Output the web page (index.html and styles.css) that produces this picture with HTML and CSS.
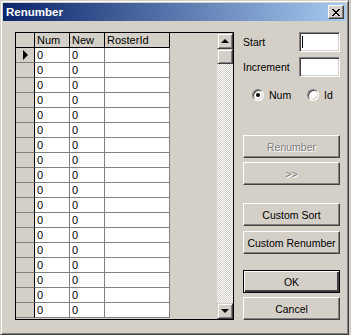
FILE: index.html
```html
<!DOCTYPE html>
<html lang="en">
<head>
    <meta charset="UTF-8">
    <meta name="viewport" content="width=device-width, initial-scale=1">
    <title>Renumber</title>
    <link rel="stylesheet" href="styles.css">
</head>
<body>
    <div class="window">
        <div class="titlebar">
            <span class="title">Renumber</span>
            <button type="button" class="close-btn" aria-label="Close">
                <svg width="8" height="7" viewBox="0 0 8 7" shape-rendering="crispEdges">
                    <path d="M0 0h2v1H0zM6 0h2v1H6zM1 1h2v1H1zM5 1h2v1H5zM2 2h4v1H2zM3 3h2v1H3zM2 4h4v1H2zM1 5h2v1H1zM5 5h2v1H5zM0 6h2v1H0zM6 6h2v1H6z" fill="#000"/>
                </svg>
            </button>
        </div>
        <div class="client">
            <div class="grid">
                <div class="grid-body">
                    <div class="grid-row header">
                        <div class="cell ind"></div>
                        <div class="cell">Num</div>
                        <div class="cell">New</div>
                        <div class="cell">RosterId</div>
                    </div>
                    <div class="grid-row current">
                        <div class="cell ind"><span class="pointer"></span></div>
                        <div class="cell">0</div>
                        <div class="cell">0</div>
                        <div class="cell"></div>
                    </div>
                    <div class="grid-row"><div class="cell ind"></div><div class="cell">0</div><div class="cell">0</div><div class="cell"></div></div>
                    <div class="grid-row"><div class="cell ind"></div><div class="cell">0</div><div class="cell">0</div><div class="cell"></div></div>
                    <div class="grid-row"><div class="cell ind"></div><div class="cell">0</div><div class="cell">0</div><div class="cell"></div></div>
                    <div class="grid-row"><div class="cell ind"></div><div class="cell">0</div><div class="cell">0</div><div class="cell"></div></div>
                    <div class="grid-row"><div class="cell ind"></div><div class="cell">0</div><div class="cell">0</div><div class="cell"></div></div>
                    <div class="grid-row"><div class="cell ind"></div><div class="cell">0</div><div class="cell">0</div><div class="cell"></div></div>
                    <div class="grid-row"><div class="cell ind"></div><div class="cell">0</div><div class="cell">0</div><div class="cell"></div></div>
                    <div class="grid-row"><div class="cell ind"></div><div class="cell">0</div><div class="cell">0</div><div class="cell"></div></div>
                    <div class="grid-row"><div class="cell ind"></div><div class="cell">0</div><div class="cell">0</div><div class="cell"></div></div>
                    <div class="grid-row"><div class="cell ind"></div><div class="cell">0</div><div class="cell">0</div><div class="cell"></div></div>
                    <div class="grid-row"><div class="cell ind"></div><div class="cell">0</div><div class="cell">0</div><div class="cell"></div></div>
                    <div class="grid-row"><div class="cell ind"></div><div class="cell">0</div><div class="cell">0</div><div class="cell"></div></div>
                    <div class="grid-row"><div class="cell ind"></div><div class="cell">0</div><div class="cell">0</div><div class="cell"></div></div>
                    <div class="grid-row"><div class="cell ind"></div><div class="cell">0</div><div class="cell">0</div><div class="cell"></div></div>
                    <div class="grid-row"><div class="cell ind"></div><div class="cell">0</div><div class="cell">0</div><div class="cell"></div></div>
                    <div class="grid-row"><div class="cell ind"></div><div class="cell">0</div><div class="cell">0</div><div class="cell"></div></div>
                    <div class="grid-row"><div class="cell ind"></div><div class="cell">0</div><div class="cell">0</div><div class="cell"></div></div>
                </div>
                <div class="vscroll">
                    <div class="scroll-btn"><span class="arrow up"></span></div>
                    <div class="scroll-thumb"></div>
                    <div class="scroll-track"></div>
                    <div class="scroll-btn"><span class="arrow down"></span></div>
                </div>
            </div>

            <div class="side">
                <div class="field-row">
                    <label>Start</label>
                    <div class="textbox focused"></div>
                </div>
                <div class="field-row increment">
                    <label>Increment</label>
                    <div class="textbox"></div>
                </div>
                <div class="radio-row">
                    <label class="radio"><span class="radio-dot checked"></span>Num</label>
                    <label class="radio"><span class="radio-dot"></span>Id</label>
                </div>

                <button type="button" class="btn renumber-btn" disabled>Renumber</button>
                <button type="button" class="btn next-btn" disabled>&gt;&gt;</button>

                <button type="button" class="btn sort-btn">Custom Sort</button>
                <button type="button" class="btn custom-btn">Custom Renumber</button>

                <button type="button" class="btn ok-btn">OK</button>
                <button type="button" class="btn cancel-btn">Cancel</button>
            </div>
        </div>
    </div>
</body>
</html>
```

FILE: styles.css
```css
* {
    box-sizing: border-box;
}

body {
    margin: 0;
    background-color: #d4d0c8;
    font-family: 'Liberation Sans', Arial, sans-serif;
    font-size: 11px;
    color: #000;
}

.window {
    width: 349px;
    height: 335px;
    padding: 2px;
    background-color: #d4d0c8;
    border: 1px solid;
    border-color: #d4d0c8 #404040 #404040 #d4d0c8;
    box-shadow: inset 1px 1px #fff, inset -1px -1px #808080;
}

.titlebar {
    display: flex;
    align-items: center;
    justify-content: space-between;
    height: 18px;
    padding: 0 2px 0 3px;
    background: linear-gradient(to right, #0a246a, #a6caf0);
}

.title {
    color: #fff;
    font-weight: bold;
    font-size: 11.5px;
}

.close-btn {
    display: flex;
    align-items: center;
    justify-content: center;
    width: 16px;
    height: 14px;
    padding: 0;
    background-color: #d4d0c8;
    border: 1px solid;
    border-color: #fff #404040 #404040 #fff;
    box-shadow: inset -1px -1px #808080;
}

.client {
    display: flex;
    padding: 11px 0 0 12px;
}

/* data grid */
.grid {
    display: flex;
    width: 219px;
    height: 288px;
    border: 1px solid #000;
}

.grid-body {
    flex: 1;
    overflow: hidden;
}

.grid-row {
    display: grid;
    grid-template-columns: 19px 35px 35px 65px;
    height: 15px;
}

.cell {
    padding-left: 2px;
    line-height: 14px;
    background-color: #fff;
    border-right: 1px solid #808080;
    border-bottom: 1px solid #808080;
    white-space: nowrap;
    overflow: hidden;
}

.cell.ind {
    background-color: #d4d0c8;
    border-right-color: #000;
}

.header .cell {
    background-color: #d4d0c8;
    border-color: #000;
}

.pointer {
    display: block;
    width: 0;
    height: 0;
    margin: 2px 0 0 5px;
    border-left: 5px solid #000;
    border-top: 5px solid transparent;
    border-bottom: 5px solid transparent;
}

.vscroll {
    display: flex;
    flex-direction: column;
    width: 16px;
}

.scroll-btn,
.scroll-thumb {
    display: flex;
    align-items: center;
    justify-content: center;
    height: 16px;
    background-color: #d4d0c8;
    border: 1px solid;
    border-color: #d4d0c8 #404040 #404040 #d4d0c8;
    box-shadow: inset 1px 1px #fff, inset -1px -1px #808080;
}

.scroll-thumb {
    height: 15px;
}

.scroll-track {
    flex: 1;
    background: repeating-conic-gradient(#fff 0 25%, #d4d0c8 0 50%) 0 0 / 2px 2px;
}

.arrow {
    width: 0;
    height: 0;
    border-left: 4px solid transparent;
    border-right: 4px solid transparent;
}

.arrow.up {
    border-bottom: 4px solid #000;
}

.arrow.down {
    border-top: 4px solid #000;
}

/* right hand controls */
.side {
    display: flex;
    flex-direction: column;
    width: 97px;
    margin-left: 9px;
    font-size: 10.5px;
}

.field-row {
    display: flex;
    align-items: center;
    justify-content: space-between;
    height: 20px;
}

.field-row.increment {
    margin-top: 5px;
}

.textbox {
    position: relative;
    width: 41px;
    height: 20px;
    background-color: #fff;
    border: 1px solid;
    border-color: #808080 #fff #fff #808080;
    box-shadow: inset 1px 1px #404040, inset -1px -1px #d4d0c8;
}

.textbox.focused::before {
    content: '';
    position: absolute;
    left: 2px;
    top: 3px;
    width: 1px;
    height: 12px;
    background-color: #000;
}

.radio-row {
    display: flex;
    height: 13px;
    margin-top: 11px;
    padding-left: 9px;
}

.radio {
    display: flex;
    flex: none;
    align-items: center;
    width: 55px;
}

.radio-dot {
    position: relative;
    width: 12px;
    height: 12px;
    margin-right: 5px;
    background-color: #fff;
    border: 1px solid;
    border-color: #808080 #fff #fff #808080;
    border-radius: 50%;
    box-shadow: inset 1px 1px #404040, inset -1px -1px #d4d0c8;
}

.radio-dot.checked::after {
    content: '';
    position: absolute;
    left: 3px;
    top: 3px;
    width: 4px;
    height: 4px;
    border-radius: 50%;
    background-color: #000;
}

.btn {
    height: 23px;
    margin-top: 4px;
    padding: 0;
    font-family: inherit;
    font-size: inherit;
    color: #000;
    background-color: #d4d0c8;
    border: 1px solid;
    border-color: #fff #404040 #404040 #fff;
    box-shadow: inset -1px -1px #808080;
}

.btn:disabled {
    color: #808080;
    text-shadow: 1px 1px #fff;
}

.renumber-btn {
    margin-top: 34px;
}

.sort-btn {
    margin-top: 18px;
}

.custom-btn {
    margin-top: 5px;
}

.ok-btn {
    margin-top: 16px;
    border-color: #000;
    box-shadow: inset 1px 1px #fff, inset -2px -2px #404040, inset -1px -1px #808080;
}
```
